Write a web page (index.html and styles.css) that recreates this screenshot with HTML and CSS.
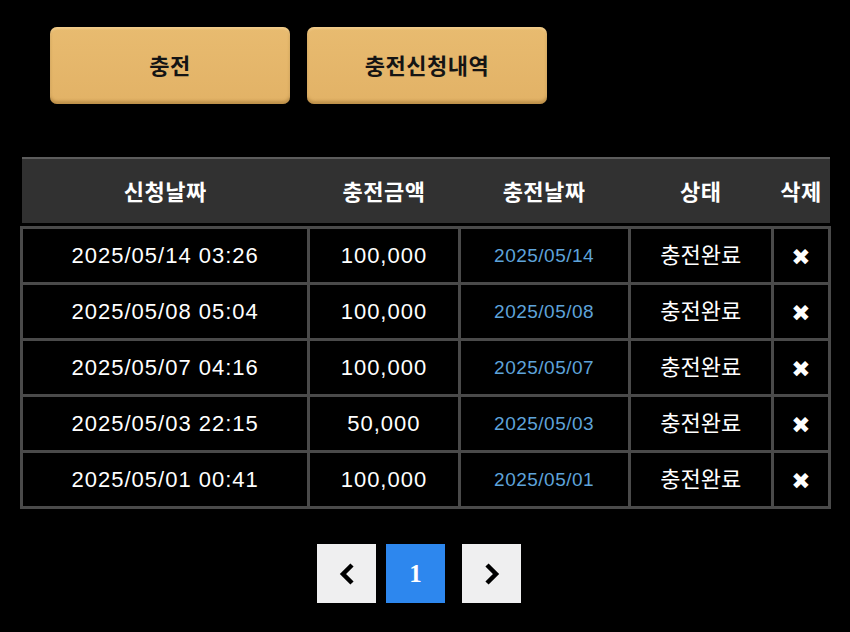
FILE: index.html
```html
<!DOCTYPE html>
<html>
<head>
<meta charset="UTF-8">
<title>충전신청내역</title>
<link rel="stylesheet" href="styles.css">
</head>
<body>

	<div class="tabs">
		<a class="tab-btn" href="#">충전</a>
		<a class="tab-btn" href="#">충전신청내역</a>
	</div>

	<table class="list">
		<thead>
			<tr>
				<th class="c1">신청날짜</th>
				<th class="c2">충전금액</th>
				<th class="c3">충전날짜</th>
				<th class="c4">상태</th>
				<th class="c5">삭제</th>
			</tr>
		</thead>
		<tbody>
			<tr>
				<td>2025/05/14 03:26</td>
				<td>100,000</td>
				<td class="date">2025/05/14</td>
				<td class="state">충전완료</td>
				<td class="del">&#10006;</td>
			</tr>
			<tr>
				<td>2025/05/08 05:04</td>
				<td>100,000</td>
				<td class="date">2025/05/08</td>
				<td class="state">충전완료</td>
				<td class="del">&#10006;</td>
			</tr>
			<tr>
				<td>2025/05/07 04:16</td>
				<td>100,000</td>
				<td class="date">2025/05/07</td>
				<td class="state">충전완료</td>
				<td class="del">&#10006;</td>
			</tr>
			<tr>
				<td>2025/05/03 22:15</td>
				<td>50,000</td>
				<td class="date">2025/05/03</td>
				<td class="state">충전완료</td>
				<td class="del">&#10006;</td>
			</tr>
			<tr>
				<td>2025/05/01 00:41</td>
				<td>100,000</td>
				<td class="date">2025/05/01</td>
				<td class="state">충전완료</td>
				<td class="del">&#10006;</td>
			</tr>
		</tbody>
	</table>

	<div class="paging">
		<a class="pg prev" href="#"><svg width="18" height="24" viewBox="0 0 18 24"><path d="M14 3 L5 12 L14 21" fill="none" stroke="#000" stroke-width="4.5"/></svg></a>
		<a class="pg on" href="#">1</a>
		<a class="pg next" href="#"><svg width="18" height="24" viewBox="0 0 18 24"><path d="M4 3 L13 12 L4 21" fill="none" stroke="#000" stroke-width="4.5"/></svg></a>
	</div>

</body>
</html>
```

FILE: styles.css
```css
body{
	margin:0;
	padding:0;
	background:#000;
	font-family:"Liberation Sans", "Noto Sans CJK KR", sans-serif;
	color:#fff;
}
.tabs{
	display:flex;
	gap:17px;
	padding:27px 0 0 50px;
}
.tab-btn{
	display:flex;
	align-items:center;
	justify-content:center;
	width:240px;
	height:77px;
	padding-bottom:4px;
	box-sizing:border-box;
	border-radius:7px;
	background:linear-gradient(#e8bb70, #e2b266);
	box-shadow:inset 0 -3px 3px rgba(120,80,20,0.35), inset 0 2px 2px rgba(255,230,180,0.4);
	color:#141414;
	font-size:22px;
	font-weight:bold;
	letter-spacing:0.5px;
	text-decoration:none;
}
.list{
	margin:53px 0 0 20px;
	width:811px;
	border-collapse:collapse;
}
.list thead th{
	height:62px;
	padding:0 0 5px;
	background:#313131;
	border-top:2px solid #5c5c5c;
	box-shadow:inset 0 -3px 0 #000;
	font-size:22px;
	font-weight:bold;
	letter-spacing:0.5px;
	color:#fff;
	text-align:center;
}
.list th.c1{width:287px;}
.list th.c2{width:150px;}
.list th.c3{width:170px;}
.list th.c4{width:143px;}
.list th.c5{width:57px;}
.list tbody td{
	height:50px;
	padding:0;
	border:3px solid #4a4a4a;
	background:#000;
	font-size:22px;
	line-height:24px;
	letter-spacing:1px;
	text-align:center;
	color:#fff;
}
.list td.date{
	color:#5ea3da;
	font-size:19px;
	letter-spacing:0.5px;
}
.list td.state{
	font-size:22px;
	letter-spacing:0;
}
.list td.del{
	font-size:23px;
	letter-spacing:0;
	font-family:"DejaVu Sans", sans-serif;
	padding-top:3px;
}
.paging{
	display:flex;
	gap:10px;
	margin-top:35px;
	padding-left:317px;
}
.pg{
	display:flex;
	align-items:center;
	justify-content:center;
	width:59px;
	height:59px;
	background:#efeff0;
	text-decoration:none;
}
.pg.on{
	background:#2d87ee;
	color:#fff;
	font-family:"Liberation Serif", serif;
	font-weight:bold;
	font-size:25px;
}
.pg.next{
	margin-left:7px;
}
```
